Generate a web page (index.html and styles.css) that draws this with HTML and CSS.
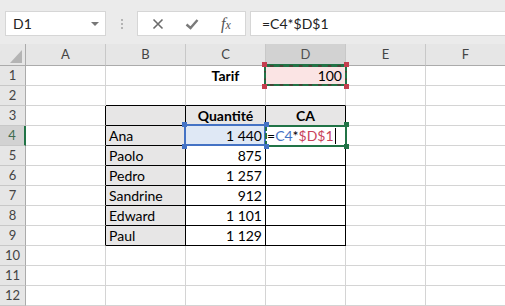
FILE: index.html
```html
<!DOCTYPE html>
<html lang="fr">
<head>
  <meta charset="UTF-8">
  <title>Classeur</title>
  <link rel="stylesheet" href="styles.css">
</head>
<body>
  <div class="toolbar">
    <div class="namebox"><span>D1</span><span class="caret"></span></div>
    <div class="grip"><i></i><i></i><i></i></div>
    <div class="buttons">
      <svg class="ico" viewBox="0 0 14 14"><path d="M2.5 2.5 L11.5 11.5 M11.5 2.5 L2.5 11.5" stroke="#6b6b6b" stroke-width="1.6" fill="none"/></svg>
      <svg class="ico ok" viewBox="0 0 14 14"><path d="M1.5 7.5 L5.5 11 L12.5 3" stroke="#7a7a7a" stroke-width="2.4" fill="none"/></svg>
      <span class="fx">f<small>x</small></span>
    </div>
    <div class="formula">=C4*$D$1</div>
  </div>

  <div class="sheet">
    <!-- en-têtes de colonnes -->
    <div class="c h corner"><svg viewBox="0 0 26 22" width="26" height="22"><path d="M10 19 L22 19 L22 6 Z" fill="#b4b4b4"/></svg></div>
    <div class="c h">A</div>
    <div class="c h">B</div>
    <div class="c h">C</div>
    <div class="c h hsel">D</div>
    <div class="c h">E</div>
    <div class="c h">F</div>

    <div class="c rh">1</div>
    <div class="c"></div>
    <div class="c"></div>
    <div class="c b center">Tarif</div>
    <div class="c num">
      <span class="copy"></span>
      <span class="h-red tl"></span><span class="h-red tr"></span><span class="h-red bl"></span><span class="h-red br"></span>
      <span class="val">100</span>
    </div>
    <div class="c"></div>
    <div class="c"></div>

    <div class="c rh">2</div>
    <div class="c"></div>
    <div class="c above"></div>
    <div class="c above"></div>
    <div class="c above"></div>
    <div class="c"></div>
    <div class="c"></div>

    <div class="c rh">3</div>
    <div class="c before"></div>
    <div class="c t gray"></div>
    <div class="c t gray b center">Quantité</div>
    <div class="c t gray b center">CA</div>
    <div class="c"></div>
    <div class="c"></div>

    <div class="c rh rsel">4</div>
    <div class="c before"></div>
    <div class="c t gray">Ana</div>
    <div class="c t num ref">
      <span class="refbox"></span>
      <span class="h-blue tl"></span><span class="h-blue tr"></span><span class="h-blue bl"></span><span class="h-blue br"></span>
      <span class="val">1 440</span>
    </div>
    <div class="c t edit">
      <span class="editbox"></span>
      <span class="h-green tr"></span><span class="h-green br"></span>
      <span class="val">=<span class="blue">C4</span>*<span class="red">$D$1</span><span class="cursor"></span></span>
    </div>
    <div class="c"></div>
    <div class="c"></div>

    <div class="c rh">5</div>
    <div class="c before"></div>
    <div class="c t gray">Paolo</div>
    <div class="c t num">875</div>
    <div class="c t"></div>
    <div class="c"></div>
    <div class="c"></div>

    <div class="c rh">6</div>
    <div class="c before"></div>
    <div class="c t gray">Pedro</div>
    <div class="c t num">1 257</div>
    <div class="c t"></div>
    <div class="c"></div>
    <div class="c"></div>

    <div class="c rh">7</div>
    <div class="c before"></div>
    <div class="c t gray">Sandrine</div>
    <div class="c t num">912</div>
    <div class="c t"></div>
    <div class="c"></div>
    <div class="c"></div>

    <div class="c rh">8</div>
    <div class="c before"></div>
    <div class="c t gray">Edward</div>
    <div class="c t num">1 101</div>
    <div class="c t"></div>
    <div class="c"></div>
    <div class="c"></div>

    <div class="c rh">9</div>
    <div class="c before"></div>
    <div class="c t gray">Paul</div>
    <div class="c t num">1 129</div>
    <div class="c t"></div>
    <div class="c"></div>
    <div class="c"></div>

    <div class="c rh">10</div>
    <div class="c"></div><div class="c"></div><div class="c"></div><div class="c"></div><div class="c"></div><div class="c"></div>

    <div class="c rh">11</div>
    <div class="c"></div><div class="c"></div><div class="c"></div><div class="c"></div><div class="c"></div><div class="c"></div>

    <div class="c rh">12</div>
    <div class="c"></div><div class="c"></div><div class="c"></div><div class="c"></div><div class="c"></div><div class="c"></div>
  </div>
</body>
</html>
```

FILE: styles.css
```css
/* base */
* {
  box-sizing: border-box;
}

body {
  margin: 0;
  width: 505px;
  height: 306px;
  overflow: hidden;
  background: #fff;
  font-family: Lato, "Open Sans", sans-serif;
  color: #000;
}

/* barre de formule */
.toolbar {
  height: 44px;
  background: #ebebeb;
  display: flex;
  align-items: flex-start;
  padding-top: 11px;
}

.namebox {
  margin-left: 5px;
  width: 101px;
  height: 25px;
  background: #fff;
  border: 1px solid #d6d6d6;
  display: flex;
  align-items: center;
  justify-content: space-between;
  padding: 0 6px 0 7px;
  font-size: 14px;
  color: #222;
}

.caret {
  width: 0;
  height: 0;
  border-left: 4px solid transparent;
  border-right: 4px solid transparent;
  border-top: 4px solid #777;
}

.grip {
  width: 31px;
  height: 25px;
  display: flex;
  flex-direction: column;
  align-items: center;
  justify-content: center;
  gap: 2px;
}

.grip i {
  width: 2px;
  height: 2px;
  background: #b4b4b4;
}

.buttons {
  width: 109px;
  height: 25px;
  background: #fff;
  border: 1px solid #d6d6d6;
  display: flex;
  align-items: center;
  padding-left: 13px;
}

.ico {
  width: 14px;
  height: 14px;
}

.ico.ok {
  margin-left: 20px;
}

.fx {
  margin-left: 22px;
  font-family: "Liberation Serif", serif;
  font-style: italic;
  font-size: 16px;
  color: #555;
}

.fx small {
  font-size: 12px;
}

.formula {
  flex: 1;
  margin-left: 4px;
  height: 25px;
  background: #fff;
  border: 1px solid #d6d6d6;
  border-right: none;
  padding-left: 11px;
  font-size: 14px;
  line-height: 23px;
  color: #222;
}

/* grille */
.sheet {
  display: grid;
  grid-template-columns: 26px repeat(6, 80px);
  grid-template-rows: 22px;
  grid-auto-rows: 20px;
}

.c {
  position: relative;
  border-right: 1px solid #d4d4d4;
  border-bottom: 1px solid #d4d4d4;
  padding: 0 3px;
  font-size: 14px;
  line-height: 19px;
  white-space: nowrap;
}

.h {
  background: #e6e6e6;
  border-right-color: #c8c8c8;
  border-bottom-color: #ababab;
  text-align: center;
  color: #444;
  font-size: 13px;
  line-height: 21px;
}

.corner {
  padding: 0;
  border-right-color: #ababab;
}

.corner svg {
  display: block;
}

.hsel {
  background: #d2d2d2;
  color: #505050;
  border-bottom: 2px solid #217346;
}

.rh {
  background: #e6e6e6;
  border-right-color: #ababab;
  border-bottom-color: #c8c8c8;
  text-align: center;
  color: #444;
  font-size: 13px;
  padding: 0;
}

.rsel {
  background: #d2d2d2;
  color: #3f6b4f;
  border-right: 2px solid #217346;
}

.b {
  font-weight: bold;
}

.center {
  text-align: center;
}

.num {
  text-align: right;
}

.gray {
  background: #e7e6e6;
}

/* bordures du tableau */
.t {
  border-right-color: #000;
  border-bottom-color: #000;
}

.above {
  border-bottom-color: #000;
}

.before {
  border-right-color: #000;
}

.val {
  position: relative;
}

.copy {
  position: absolute;
  left: -2px;
  right: -2px;
  top: -1px;
  bottom: -1px;
  background: #fbe4e4;
  border: 2px dashed #217346;
  outline: 2px solid #4a4438;
  outline-offset: -2px;
}

.copy::before {
  content: "";
  position: absolute;
  inset: -2px;
  border: 2px dashed #217346;
}

/* C4 : référence */
.ref {
  background: #dfe8f5;
}

.refbox {
  position: absolute;
  left: -2px;
  right: -1px;
  top: -2px;
  bottom: -1px;
  border: 2px solid #4472c4;
}

/* D4 : cellule en édition */
.edit {
  padding-left: 1px;
}

.editbox {
  position: absolute;
  left: -1px;
  right: -2px;
  top: -1px;
  bottom: -2px;
  border: 2px solid #217346;
  border-left-style: dashed;
}

.blue {
  color: #4472c4;
}

.red {
  color: #c8425a;
}

.cursor {
  display: inline-block;
  width: 1px;
  height: 16px;
  margin-left: 1px;
  background: #000;
  vertical-align: -3px;
}

/* poignées */
.h-red, .h-blue, .h-green {
  position: absolute;
  width: 5px;
  height: 5px;
  z-index: 2;
}

.h-red { background: #c43e4e; }
.h-blue { background: #4472c4; }
.h-green { background: #217346; }

.tl { left: -4px; top: -4px; }
.tr { right: -4px; top: -4px; }
.bl { left: -4px; bottom: -4px; }
.br { right: -4px; bottom: -4px; }
```
